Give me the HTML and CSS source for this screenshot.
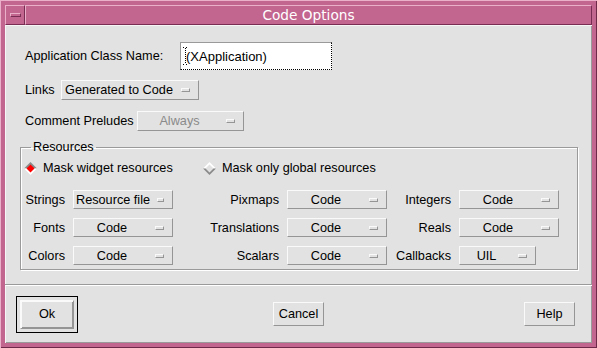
FILE: index.html
```html
<!DOCTYPE html>
<html lang="en">
<head>
  <meta charset="UTF-8" />
  <title>Code Options</title>
  <link rel="stylesheet" href="styles.css">
</head>
<body>

  <div class="window">
    <div class="titlebar">
      <div class="menu-btn"><span class="menu-bar"></span></div>
      <div class="title">Code Options</div>
    </div>

    <div class="body">
      <div class="row row-name">
        <span class="lbl">Application Class Name:</span>
        <div class="textfield">
          <svg class="caret" width="5" height="18" viewBox="0 0 5 18">
            <path d="M0 0.5h2M3 0.5h2M0 17.5h2M3 17.5h2M2.5 1v16" stroke="#000" stroke-width="1" stroke-dasharray="1 1" fill="none"/>
          </svg>
          <span>(XApplication)</span>
        </div>
      </div>

      <div class="row row-links">
        <span class="lbl">Links</span>
        <div class="option opt-links"><span class="opt-text">Generated to Code</span><span class="ind"></span></div>
      </div>

      <div class="row row-prelude">
        <span class="lbl">Comment Preludes</span>
        <div class="option opt-prelude"><span class="opt-text disabled">Always</span><span class="ind"></span></div>
      </div>

      <fieldset class="resources">
        <legend>Resources</legend>

        <div class="radios">
          <label class="radio radio-first">
            <svg width="13" height="13" viewBox="0 0 13 13">
              <polygon points="0,6.5 6.5,0 13,6.5" fill="#8a8a8a"/>
              <polygon points="0,6.5 6.5,13 13,6.5" fill="#fff"/>
              <polygon points="2.5,6.5 6.5,2.5 10.5,6.5 6.5,10.5" fill="#f00"/>
            </svg>
            Mask widget resources
          </label>
          <label class="radio">
            <svg width="13" height="13" viewBox="0 0 13 13">
              <polygon points="0,6.5 6.5,0 13,6.5" fill="#fff"/>
              <polygon points="0,6.5 6.5,13 13,6.5" fill="#8a8a8a"/>
              <polygon points="2.5,6.5 6.5,2.5 10.5,6.5 6.5,10.5" fill="#e2e2e2"/>
            </svg>
            Mask only global resources
          </label>
        </div>

        <div class="res-grid">
          <span class="lbl-r">Strings</span>
          <div class="option opt-res"><span class="opt-text">Resource file</span><span class="ind"></span></div>
          <span class="lbl-r">Pixmaps</span>
          <div class="option opt-res"><span class="opt-text">Code</span><span class="ind"></span></div>
          <span class="lbl-r">Integers</span>
          <div class="option opt-res"><span class="opt-text">Code</span><span class="ind"></span></div>

          <span class="lbl-r">Fonts</span>
          <div class="option opt-res"><span class="opt-text">Code</span><span class="ind"></span></div>
          <span class="lbl-r">Translations</span>
          <div class="option opt-res"><span class="opt-text">Code</span><span class="ind"></span></div>
          <span class="lbl-r">Reals</span>
          <div class="option opt-res"><span class="opt-text">Code</span><span class="ind"></span></div>

          <span class="lbl-r">Colors</span>
          <div class="option opt-res"><span class="opt-text">Code</span><span class="ind"></span></div>
          <span class="lbl-r">Scalars</span>
          <div class="option opt-res"><span class="opt-text">Code</span><span class="ind"></span></div>
          <span class="lbl-r">Callbacks</span>
          <div class="option opt-uil"><span class="opt-text">UIL</span><span class="ind"></span></div>
        </div>
      </fieldset>

      <div class="actions">
        <div class="default-frame"><button class="btn btn-ok">Ok</button></div>
        <button class="btn btn-cancel">Cancel</button>
        <button class="btn btn-help">Help</button>
      </div>
    </div>
  </div>

</body>
</html>
```

FILE: styles.css
```css
body {
  margin: 0;
  background-color: #e2e2e2;
  font-family: 'Liberation Sans', Arial, sans-serif;
  font-size: 12.7px;
  color: #000;
}

.window {
  width: 597px;
  height: 348px;
  box-sizing: border-box;
  padding: 5px;
  background-color: #c3668f;
  box-shadow: inset 1px 1px 0 #eab0ca, inset -1px -1px 0 #6e2848;
  display: flex;
  flex-direction: column;
}

/* title bar */
.titlebar {
  display: flex;
  height: 20px;
}

.menu-btn,
.title {
  box-sizing: border-box;
  border: 1px solid;
  border-color: #eab0ca #7a2d52 #7a2d52 #eab0ca;
}

.menu-btn {
  width: 20px;
  display: flex;
  align-items: center;
  justify-content: center;
}

.menu-bar {
  width: 9px;
  height: 2px;
  border: 1px solid;
  border-color: #eab0ca #7a2d52 #7a2d52 #eab0ca;
}

.title {
  flex: 1;
  color: #fff;
  font-family: 'DejaVu Sans', sans-serif;
  font-size: 13.7px;
  line-height: 18px;
  text-align: center;
}

/* dialog body */
.body {
  flex: 1;
  background-color: #e2e2e2;
  box-shadow: inset 1px 1px 0 #f6f6f6, inset -1px -1px 0 #9a9a9a;
  display: flex;
  flex-direction: column;
}

.row {
  display: flex;
  align-items: center;
  padding-left: 20px;
}

.row-name {
  margin-top: 17px;
}

.row-name .lbl {
  width: 155px;
}

.row-links {
  margin-top: 10px;
}

.row-links .lbl {
  width: 36px;
}

.row-prelude {
  margin-top: 11px;
}

.row-prelude .lbl {
  width: 112px;
}

.textfield {
  width: 152px;
  height: 28px;
  box-sizing: border-box;
  background-color: #fff;
  border-top: 1px solid #9a9a9a;
  border-left: 1px solid #9a9a9a;
  border-right: 1px dotted #000;
  border-bottom: 1px dotted #000;
  display: flex;
  align-items: center;
  padding-left: 2px;
  font-size: 13px;
}

.caret {
  margin-right: -2px;
}

/* option menus */
.option {
  height: 20px;
  box-sizing: border-box;
  border: 1px solid;
  border-color: #fafafa #959595 #959595 #fafafa;
  display: flex;
  align-items: center;
  padding: 0 8px 0 2px;
}

.opt-text {
  flex: 1;
  text-align: center;
  white-space: nowrap;
}

.opt-text.disabled {
  color: #8a8a8a;
}

.ind {
  width: 7px;
  height: 2px;
  margin-left: 7px;
  border: 1px solid;
  border-color: #fafafa #959595 #959595 #fafafa;
}

.opt-links {
  width: 138px;
}

.opt-prelude {
  width: 107px;
}

.opt-res {
  width: 100px;
  height: 19px;
}

.opt-uil {
  width: 77px;
  height: 19px;
}

/* resources group */
.resources {
  margin: 9px 14px 0 15px;
  padding: 0 0 4px 3px;
  border: 1px solid #9a9a9a;
  box-shadow: inset 1px 1px 0 #fff, 1px 1px 0 #fff;
}

.resources legend {
  margin-left: 7px;
  padding: 0 2px;
  line-height: 14px;
}

.radios {
  display: flex;
  align-items: center;
  height: 20px;
  margin-top: 4px;
}

.radio {
  display: flex;
  align-items: center;
  gap: 6px;
}

.radio-first {
  width: 179px;
}

.radio svg {
  flex: none;
}

.res-grid {
  display: grid;
  grid-template-columns: 41px 100px 98px 100px 56px 100px;
  column-gap: 8px;
  row-gap: 9px;
  margin-top: 12px;
  align-items: center;
}

.lbl-r {
  text-align: right;
}

/* bottom buttons */
.actions {
  margin-top: 14px;
  flex: 1;
  border-top: 1px solid #9a9a9a;
  box-shadow: inset 0 1px 0 #fff;
  display: grid;
  grid-template-columns: 1fr auto 1fr;
  align-items: center;
  padding: 0 17px 0 11px;
}

.btn {
  font-family: inherit;
  font-size: inherit;
  color: #000;
  background-color: #e2e2e2;
  border: 1px solid;
  border-color: #fafafa #959595 #959595 #fafafa;
  border-radius: 0;
  padding: 0;
  height: 24px;
  width: 51px;
}

.btn-cancel {
  margin-left: 6px;
}

.default-frame {
  justify-self: start;
  width: 62px;
  height: 37px;
  box-sizing: border-box;
  border: 1px solid #000;
  display: flex;
  align-items: center;
  justify-content: center;
}

.btn-ok {
  width: 54px;
  height: 29px;
  box-shadow: inset 1px 1px 0 #fafafa, inset -1px -1px 0 #959595;
}

.btn-help {
  justify-self: end;
}
```
